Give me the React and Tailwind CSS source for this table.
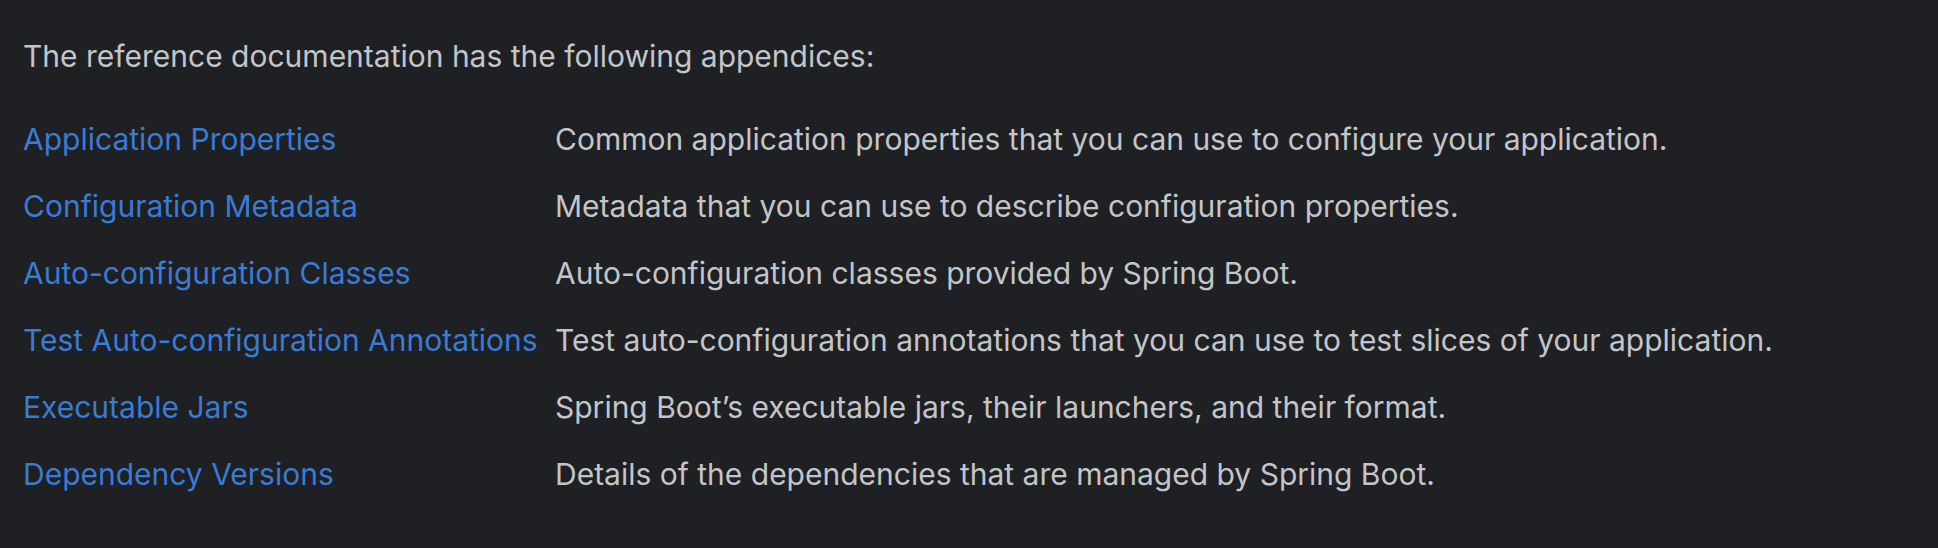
import React from 'react';

const appendices = [
  { name: 'Application Properties', desc: 'Common application properties that you can use to configure your application.' },
  { name: 'Configuration Metadata', desc: 'Metadata that you can use to describe configuration properties.' },
  { name: 'Auto-configuration Classes', desc: 'Auto-configuration classes provided by Spring Boot.' },
  { name: 'Test Auto-configuration Annotations', desc: 'Test auto-configuration annotations that you can use to test slices of your application.' },
  { name: 'Executable Jars', desc: 'Spring Boot\u2019s executable jars, their launchers, and their format.' },
  { name: 'Dependency Versions', desc: 'Details of the dependencies that are managed by Spring Boot.' },
];

const App = () => {
  return (
    <div className="w-[1938px] h-[548px] bg-[#1e2024] text-[#c4c5c8] font-['Inter',sans-serif] text-[30px] px-[23px] pt-[38px]">
      <p className="leading-[36px]">The reference documentation has the following appendices:</p>

      {/* Appendix table */}
      <table className="mt-[32px] border-collapse">
        <tbody>
          {appendices.map(item => (
            <tr key={item.name} className="h-[67px]">
              <td className="pr-[16px] w-[532px] align-middle">
                <a href="#" className="text-[#3a7bd5]">{item.name}</a>
              </td>
              <td className="align-middle">{item.desc}</td>
            </tr>
          ))}
        </tbody>
      </table>
    </div>
  );
};

export default App;
